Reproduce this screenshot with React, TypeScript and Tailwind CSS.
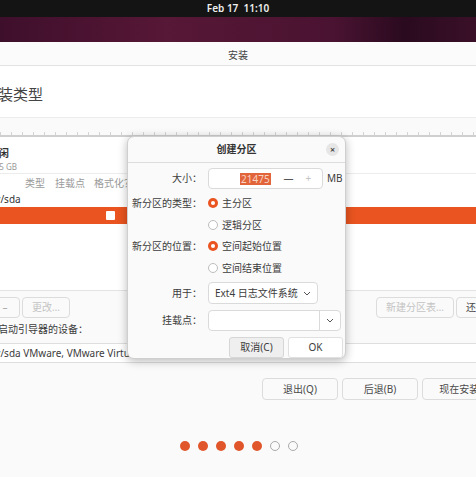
import type { ReactNode } from 'react'

function Btn({ children, className = '' }: { children: ReactNode; className?: string }) {
  return (
    <div
      className={`flex items-center justify-center rounded-[4px] border border-[#dcdcdc] bg-[#fafafa] text-[10px] text-[#4a4a4a] ${className}`}
    >
      {children}
    </div>
  )
}

function Radio({ checked, label }: { checked?: boolean; label: string }) {
  return (
    <div className="flex h-[22px] items-center gap-[4px]">
      {checked ? (
        <span className="flex h-[10px] w-[10px] items-center justify-center rounded-full bg-[#e95420]">
          <span className="h-[4px] w-[4px] rounded-full bg-white" />
        </span>
      ) : (
        <span className="h-[10px] w-[10px] rounded-full border border-[#bdbdbd] bg-white" />
      )}
      <span className="text-[10px] text-[#3c3c3c]">{label}</span>
    </div>
  )
}

function Chevron() {
  return (
    <svg width="8" height="5" viewBox="0 0 8 5" fill="none" stroke="#555" strokeWidth="1">
      <path d="M1 1l3 3 3-3" />
    </svg>
  )
}

function Row({ label, children, className = '' }: { label?: string; children: ReactNode; className?: string }) {
  return (
    <div className={`flex items-center ${className}`}>
      <div className="w-[74px] shrink-0 text-right text-[10px] text-[#3c3c3c]">{label}</div>
      <div className="ml-[6px] flex items-center">{children}</div>
    </div>
  )
}

export default function App() {
  const dots = [true, true, true, true, true, false, false]
  return (
    <div className="relative h-[477px] w-[476px] overflow-hidden bg-[#fafafa] font-['Noto_Sans','Noto_Sans_CJK_SC',sans-serif] text-[#3c3c3c]">
      {/* top bar */}
      <div className="flex h-[17px] items-center justify-center bg-[#141414] text-[10px] font-semibold text-[#eeeeee]">
        Feb 17&nbsp;&nbsp;11:10
      </div>
      <div className="h-[25px] bg-[linear-gradient(90deg,#3e0f2b_0%,#571736_35%,#4a1331_70%,#2a0a1f_85%,#3a1028_100%)]" />

      {/* window title */}
      <div className="flex h-[24px] items-center justify-center border-b border-[#e2e2e2] bg-[#fbfbfb] pt-[4px] text-[10px] text-[#444]">
        安装
      </div>
      <div className="flex h-[52px] items-center border-b border-[#ececec] bg-white pt-[6px]">
        <span className="ml-[-17px] text-[15px] text-[#444]">安装类型</span>
      </div>

      {/* partition ruler */}
      <div className="mt-[14px] h-[5px] border-b-[2px] border-[#cfcfcf] bg-[repeating-linear-gradient(90deg,#d4d4d4_0_1px,transparent_1px_11px)]" />

      {/* partition list */}
      <div className="h-[153px] bg-white">
        <div className="flex h-[37px] flex-col border-b border-[#ececec] pt-[9px]">
          <span className="ml-[-11px] text-[10px] font-semibold leading-[14px] text-[#333]">空闲</span>
          <span className="ml-[-12px] mt-[1px] text-[8px] leading-[12px] text-[#999]">21.5 GB</span>
        </div>
        <div className="flex h-[18px] items-center text-[10px] text-[#9a9a9a]">
          <span className="ml-[25px]">类型</span>
          <span className="ml-[10px]">挂载点</span>
          <span className="ml-[9px]">格式化？</span>
        </div>
        <div className="flex h-[15px] items-center">
          <span className="ml-[-20px] text-[10px] text-[#333]">/dev/sda</span>
        </div>
        <div className="flex h-[17px] items-center bg-[#e95420]">
          <span className="ml-[106px] h-[9px] w-[9px] rounded-[1px] bg-white" />
        </div>
      </div>

      {/* buttons below list */}
      <div className="flex h-[28px] items-end justify-between border-t border-[#e4e4e4]">
        <div className="flex gap-[2px]">
          <Btn className="ml-[-10px] h-[21px] w-[30px] text-[#aaa]">–</Btn>
          <Btn className="h-[21px] w-[48px] text-[#c4c4c4]">更改…</Btn>
        </div>
        <div className="flex gap-[2px]">
          <Btn className="h-[21px] w-[78px] text-[#c4c4c4]">新建分区表…</Btn>
          <Btn className="mr-[-20px] h-[21px] w-[40px]">还原</Btn>
        </div>
      </div>
      <div className="mt-[4px] text-[10px] leading-[14px] text-[#3c3c3c]">
        <span className="ml-[-2px]">启动引导器的设备：</span>
      </div>
      <div className="mt-[7px] flex h-[20px] items-center border-y border-[#dedede] bg-white text-[10px]">
        <span className="ml-[-20px] whitespace-nowrap">/dev/sda VMware, VMware Virtual S (21.5 GB)</span>
      </div>

      {/* bottom buttons */}
      <div className="mt-[15px] flex justify-end gap-[4px]">
        <Btn className="h-[22px] w-[76px]">退出(Q)</Btn>
        <Btn className="h-[22px] w-[76px]">后退(B)</Btn>
        <Btn className="mr-[-30px] h-[22px] w-[84px]">现在安装(I)</Btn>
      </div>

      {/* progress dots */}
      <div className="mt-[41px] flex justify-center gap-[8px] pl-[1px]">
        {dots.map((on, i) => (
          <span
            key={i}
            className={on ? 'h-[10px] w-[10px] rounded-full bg-[#e0562a]' : 'h-[10px] w-[10px] rounded-full border border-[#aaaaaa]'}
          />
        ))}
      </div>

      {/* dialog */}
      <div className="absolute left-[127px] top-[136px] h-[223px] w-[219px] overflow-hidden rounded-[7px] border border-[#cfcfcf] bg-[#fafafa] shadow-[0_2px_10px_rgba(0,0,0,0.28)]">
        <div className="relative flex h-[26px] items-center justify-center border-b border-[#dddddd] text-[10px] font-semibold text-[#333]">
          创建分区
          <span className="absolute right-[6px] top-[6px] flex h-[13px] w-[13px] items-center justify-center rounded-full bg-[#e6e6e6] text-[9px] text-[#444]">
            ×
          </span>
        </div>
        <Row label="大小：" className="mt-[5px]">
          <div className="flex h-[21px] w-[115px] items-center rounded-[4px] border border-[#dadada] bg-white">
            <span className="ml-[31px] bg-[#e2643a] px-[1px] text-[10px] leading-[12px] text-[#f9d3c2]">21475</span>
            <span className="ml-[13px] text-[10px] text-[#555]">—</span>
            <span className="ml-[12px] text-[10px] text-[#c4c4c4]">+</span>
          </div>
          <span className="ml-[4px] text-[10px]">MB</span>
        </Row>
        <Row label="新分区的类型：" className="mt-[3px]">
          <Radio checked label="主分区" />
        </Row>
        <Row>
          <Radio label="逻辑分区" />
        </Row>
        <Row label="新分区的位置：" className="mt-[-1px]">
          <Radio checked label="空间起始位置" />
        </Row>
        <Row>
          <Radio label="空间结束位置" />
        </Row>
        <Row label="用于：" className="mt-[3px]">
          <div className="flex h-[22px] w-[110px] items-center justify-between rounded-[4px] border border-[#dadada] bg-white px-[6px] text-[10px]">
            <span>Ext4 日志文件系统</span>
            <Chevron />
          </div>
        </Row>
        <Row label="挂载点：" className="mt-[6px]">
          <div className="flex h-[21px] w-[133px] items-center rounded-[4px] border border-[#dadada] bg-white">
            <div className="h-full w-[111px] border-r border-[#dadada]" />
            <div className="flex flex-1 justify-center">
              <Chevron />
            </div>
          </div>
        </Row>
        <div className="mt-[6px] flex justify-end gap-[4px] pr-[2px]">
          <div className="flex h-[21px] w-[55px] items-center justify-center rounded-[3px] border border-[#d6d6d6] bg-[#efefef] text-[10px]">
            取消(C)
          </div>
          <div className="flex h-[21px] w-[55px] items-center justify-center rounded-[3px] border border-[#e0e0e0] bg-white text-[10px]">
            OK
          </div>
        </div>
      </div>
    </div>
  )
}
